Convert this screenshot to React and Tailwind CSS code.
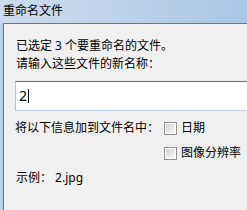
import React from 'react'

const font = { fontFamily: '"Noto Sans", "Noto Sans CJK SC", sans-serif' }

// Win7 风格复选框
function Check({ label }) {
  return (
    <div className="flex items-center h-[16px]">
      <span className="w-[13px] h-[13px] border border-[#8e8f8f] bg-white p-[1px] shrink-0">
        <span className="block w-full h-full bg-gradient-to-br from-[#d5d5d5] to-[#f8f8f8]" />
      </span>
      <span className="ml-[4px] text-[12px] leading-[16px] text-black whitespace-nowrap">{label}</span>
    </div>
  )
}

export default function App() {
  return (
    <div
      className="w-[247px] h-[210px] overflow-hidden flex flex-col bg-[#c3d7ec]"
      style={font}
    >
      <div className="h-[23px] shrink-0 pl-[3px] pt-[3px] text-[12px] leading-[16px] text-black bg-gradient-to-r from-[#cbdcee] via-[#bcd2ea] to-[#a9c6e5]">
        重命名文件
      </div>
      <div className="flex-1 flex">
        <div className="w-[3px] shrink-0 bg-gradient-to-r from-[#c6d9ed] to-[#adc7e3]" />
        <div className="flex-1 bg-[#f0f0f0] border-l border-t border-[#6b7787] pl-[11px] pt-[13px] text-[12px] leading-[18px] text-black">
          <div className="pl-[1px] whitespace-nowrap">已选定 3 个要重命名的文件。</div>
          <div className="pl-[1px] whitespace-nowrap">请输入这些文件的新名称：</div>
          <div className="mt-[8px] h-[30px] w-[260px] bg-white border border-[#abc9e2] border-t-[#3d7bad] border-b-[#b7d0e7] flex items-center pl-[3px]">
            <span className="text-[14px] leading-[16px]">2</span>
            <span className="w-[1px] h-[14px] bg-black ml-[1px]" />
          </div>
          <div className="mt-[9px] grid grid-cols-[149px_auto] gap-y-[9px] items-center">
            <div className="whitespace-nowrap leading-[16px]">将以下信息加到文件名中：</div>
            <Check label="日期" />
            <div />
            <Check label="图像分辨率" />
          </div>
          <div className="mt-[8px] pl-[1px] whitespace-nowrap">示例： 2.jpg</div>
        </div>
      </div>
    </div>
  )
}
